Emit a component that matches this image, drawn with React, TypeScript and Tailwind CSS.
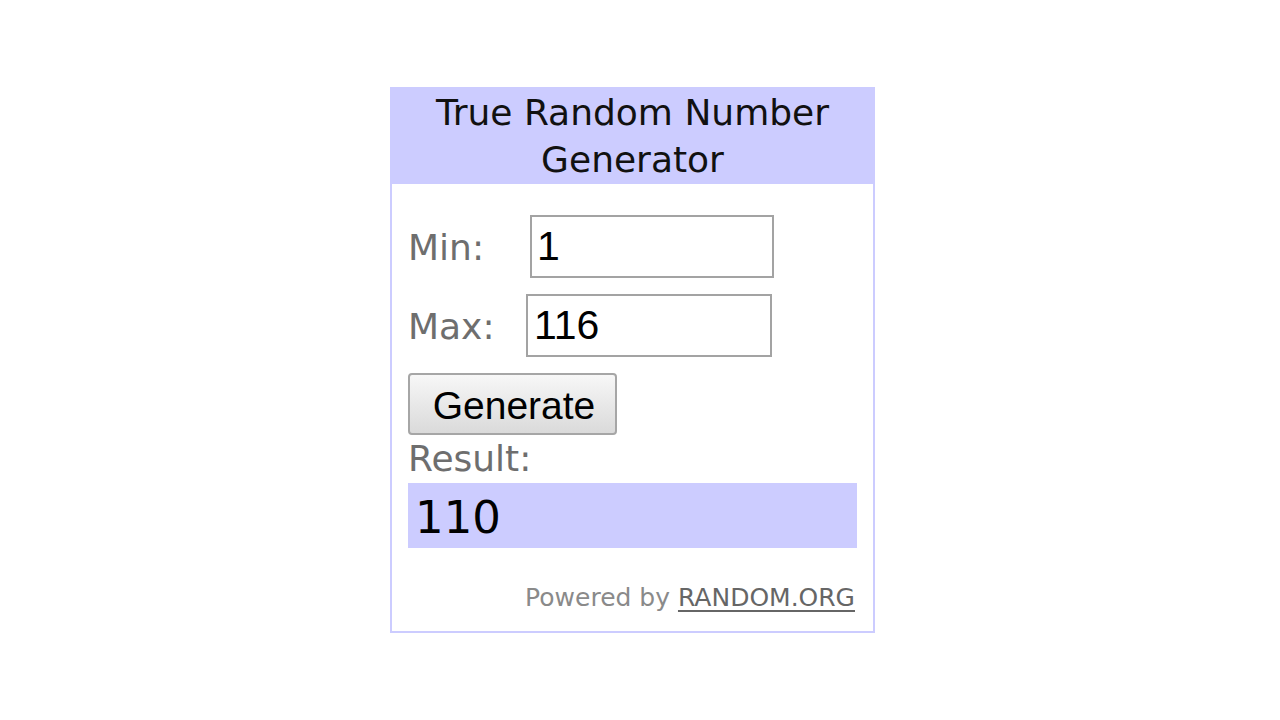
import React from "react";

export default function App() {
  const verdana = { fontFamily: '"DejaVu Sans", Verdana, sans-serif' };
  const arial = { fontFamily: '"Liberation Sans", Arial, sans-serif' };
  return (
    <div className="w-[1280px] h-[720px] bg-white pl-[390px] pt-[87px]">
      <div
        className="w-[485px] border-2 border-[#ccccff] bg-white flex flex-col"
        style={verdana}
      >
        <div className="bg-[#ccccff] text-center text-[36px] leading-[47px] text-[#111111] pb-[1px]">
          True Random Number
          <br />
          Generator
        </div>
        <div className="flex flex-col px-4 pb-[18px]">
          <div className="flex items-baseline mt-[31px]">
            <span className="w-[122px] text-[36px] text-[#6e6e6e]">Min:</span>
            <input
              readOnly
              value="1"
              className="w-[244px] h-[63px] border-2 border-[#a3a3a3] bg-white px-[5px] text-[41px] text-black outline-none"
              style={arial}
            />
          </div>
          <div className="flex items-baseline mt-[16px]">
            <span className="w-[118px] text-[36px] text-[#6e6e6e]">Max:</span>
            <input
              readOnly
              value="116"
              className="w-[246px] h-[63px] border-2 border-[#a3a3a3] bg-white px-[6px] text-[41px] text-black outline-none"
              style={arial}
            />
          </div>
          <div className="mt-[16px]">
            <button
              className="w-[209px] h-[62px] border-2 border-[#a6a6a6] rounded-[4px] bg-gradient-to-b from-[#f7f7f7] to-[#dadada] text-[39px] text-black pt-[3px] pl-[3px] leading-[50px]"
              style={arial}
            >
              Generate
            </button>
          </div>
          <div className="mt-[3px] text-[36px] leading-[41px] text-[#6e6e6e]">Result:</div>
          <div className="mt-[4px] h-[65px] bg-[#ccccff] pl-[7px] pt-[4px] text-[45px] leading-[61px] text-black">
            110
          </div>
          <div className="mt-[35px] pr-[2px] text-right text-[25px] leading-[30px] text-[#8a8a8a]">
            Powered by{" "}
            <span className="text-[#666666] underline decoration-[#666666] underline-offset-[4px]">
              RANDOM.ORG
            </span>
          </div>
        </div>
      </div>
    </div>
  );
}
